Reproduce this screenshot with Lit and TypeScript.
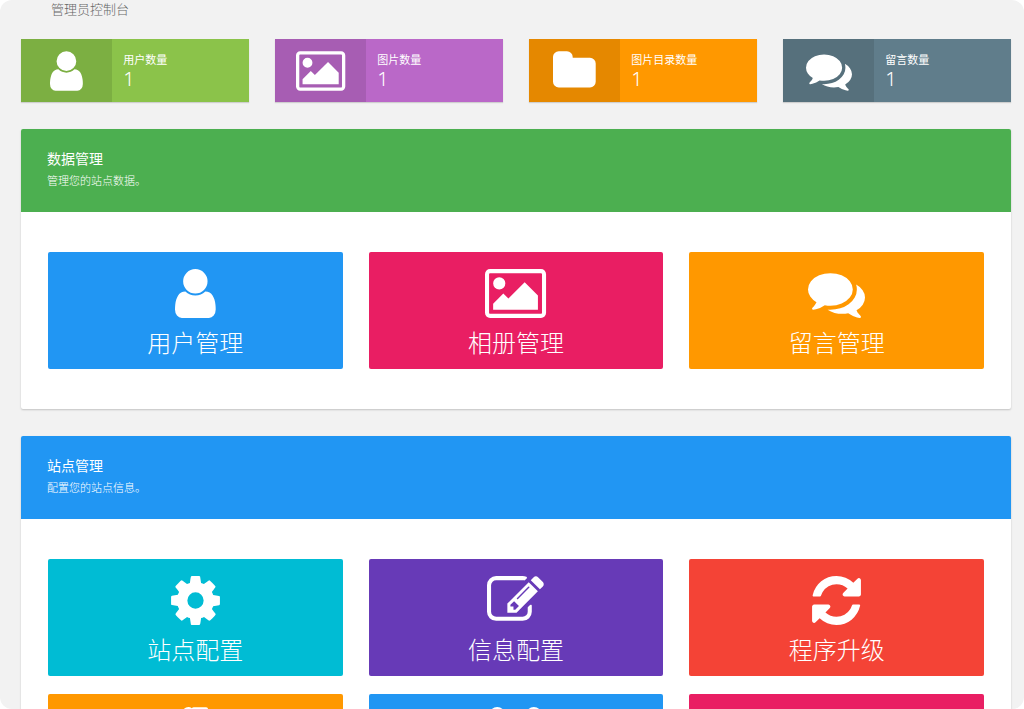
import { LitElement, html, css, svg } from "lit";
import { customElement } from "lit/decorators.js";

interface Glyph {
  w: number;
  d: string;
}

const glyphs: Record<string, Glyph> = {
  user: {
    w: 1280,
    d: "M1280 1399q0 109-62.5 187t-150.5 78h-854q-88 0-150.5-78t-62.5-187q0-85 8.5-160.5t31.5-152 58.5-131 94-89 134.5-34.5q131 128 313 128t313-128q76 0 134.5 34.5t94 89 58.5 131 31.5 152 8.5 160.5zm-256-887q0 159-112.5 271.5t-271.5 112.5-271.5-112.5-112.5-271.5 112.5-271.5 271.5-112.5 271.5 112.5 112.5 271.5z",
  },
  image: {
    w: 1920,
    d: "M640 576q0 80-56 136t-136 56-136-56-56-136 56-136 136-56 136 56 56 136zm1024 384v448h-1408v-192l320-320 160 160 512-512zm96-704h-1600q-13 0-22.5 9.5t-9.5 22.5v1216q0 13 9.5 22.5t22.5 9.5h1600q13 0 22.5-9.5t9.5-22.5v-1216q0-13-9.5-22.5t-22.5-9.5zm160 32v1216q0 66-47 113t-113 47h-1600q-66 0-113-47t-47-113v-1216q0-66 47-113t113-47h1600q66 0 113 47t47 113z",
  },
  folder: {
    w: 1664,
    d: "M1664 608v704q0 92-66 158t-158 66h-1216q-92 0-158-66t-66-158v-960q0-92 66-158t158-66h320q92 0 158 66t66 158v32h672q92 0 158 66t66 158z",
  },
  comments: {
    w: 1792,
    d: "M1408 768q0 139-94 257t-256.5 186.5-353.5 68.5q-86 0-176-16-124 88-278 128-36 9-86 16h-3q-11 0-20.5-8t-11.5-21q-1-3-1-6.5t.5-6.5 2-6l2.5-5 3.5-5.5 4-5 4.5-5 4-4.5q5-6 23-25t26-29.5 22.5-29 25-38.5 20.5-44q-124-72-195-177t-71-224q0-139 94-257t256.5-186.5 353.5-68.5 353.5 68.5 256.5 186.5 94 257zm384 256q0 120-71 224.5t-195 176.5q10 24 20.5 44t25 38.5 22.5 29 26 29.5 23 25q1 1 4 4.5t4.5 5 4 5 3.5 5.5l2.5 5 2 6 .5 6.5-1 6.5q-3 14-13 22t-22 7q-50-7-86-16-154-40-278-128-90 16-176 16-271 0-472-132 58 4 88 4 161 0 309-45t264-129q125-92 192-212t67-254q0-77-23-152 129 71 204 178t75 230z",
  },
  cog: {
    w: 1792,
    d: "M1152 896q0-106-75-181t-181-75-181 75-75 181 75 181 181 75 181-75 75-181zm512-109v222q0 12-8 23t-20 13l-185 28q-19 54-39 91 35 50 107 138 10 12 10 25t-9 23q-27 37-99 108t-94 71q-12 0-26-9l-138-108q-44 23-91 38-16 136-29 186-7 28-36 28h-222q-14 0-24.5-8.5t-11.5-21.5l-28-184q-49-16-90-37l-141 107q-10 9-25 9-14 0-25-11-126-114-165-168-7-10-7-23 0-12 8-23 15-21 51-66.5t54-70.5q-27-50-41-99l-183-27q-13-2-21-12.5t-8-23.5v-222q0-12 8-23t19-13l186-28q14-46 39-92-40-57-107-138-10-12-10-24 0-10 9-23 26-36 98.5-107.5t94.5-71.5q13 0 26 10l138 107q44-23 91-38 16-136 29-186 7-28 36-28h222q14 0 24.5 8.5t11.5 21.5l28 184q49 16 90 37l142-107q9-9 24-9 13 0 25 10 129 119 165 170 7 8 7 22 0 12-8 23-15 21-51 66.5t-54 70.5q26 50 41 98l183 28q13 2 21 12.5t8 23.5z",
  },
  edit: {
    w: 1792,
    d: "M888 1184l116-116-152-152-116 116v56h96v96h56zm440-720q-16-16-33 1l-350 350q-17 17-1 33t33-1l350-350q17-17 1-33zm80 594v190q0 119-84.5 203.5t-203.5 84.5h-832q-119 0-203.5-84.5t-84.5-203.5v-832q0-119 84.5-203.5t203.5-84.5h832q63 0 117 25 15 7 18 23 3 17-9 29l-49 49q-14 14-32 8-23-6-45-6h-832q-66 0-113 47t-47 113v832q0 66 47 113t113 47h832q66 0 113-47t47-113v-126q0-13 9-22l64-64q15-15 35-7t20 29zm-96-738l288 288-672 672h-288v-288zm444 132l-92 92-288-288 92-92q28-28 68-28t68 28l152 152q28 28 28 68t-28 68z",
  },
  refresh: {
    w: 1792,
    d: "M1639 1056q0 5-1 7-64 268-268 434.5t-478 166.5q-146 0-282.5-55t-243.5-157l-129 129q-19 19-45 19t-45-19-19-45v-448q0-26 19-45t45-19h448q26 0 45 19t19 45-19 45l-137 137q71 66 161 102t187 36q134 0 250-65t186-179q11-17 53-117 8-23 30-23h192q13 0 22.5 9.5t9.5 22.5zm25-800v448q0 26-19 45t-45 19h-448q-26 0-45-19t-19-45 19-45l138-138q-148-137-349-137-134 0-250 65t-186 179q-11 17-53 117-8 23-30 23h-199q-13 0-22.5-9.5t-9.5-22.5v-7q65-268 270-434.5t480-166.5q146 0 284 55.5t245 156.5l130-129q19-19 45-19t45 19 19 45z",
  },
  scroll: {
    w: 1280,
    d: "M230 190q0-80 56-135t134-55q60 0 110 40q20-30 60-30h390q60 0 60 60v1500q0 90-90 90h-630q-90 0-90-90z",
  },
  users: {
    w: 1920,
    d: "M593 896q-162 5-265 128h-134q-82 0-138-40.5t-56-118.5q0-353 124-353 6 0 43.5 21t97.5 42.5 119 21.5q67 0 133-23-5 37-5 66 0 139 81 256zm1071 637q0 120-73 189.5t-194 69.5h-874q-121 0-194-69.5t-73-189.5q0-53 3.5-103.5t14-109 26.5-108.5 43-97.5 62-81 85.5-53.5 111.5-20q10 0 43 21.5t73 48 107 48 135 21.5 135-21.5 107-48 73-48 43-21.5q61 0 111.5 20t85.5 53.5 62 81 43 97.5 26.5 108.5 14 109 3.5 103.5zm-1024-1277q0 106-75 181t-181 75-181-75-75-181 75-181 181-75 181 75 75 181zm704 384q0 159-112.5 271.5t-271.5 112.5-271.5-112.5-112.5-271.5 112.5-271.5 271.5-112.5 271.5 112.5 112.5 271.5zm576 225q0 78-56 118.5t-138 40.5h-134q-103-123-265-128 81-117 81-256 0-29-5-66 66 23 133 23 59 0 119-21.5t97.5-42.5 43.5-21q124 0 124 353zm-128-609q0 106-75 181t-181 75-181-75-75-181 75-181 181-75 181 75 75 181z",
  },
};

function icon(name: string) {
  const g = glyphs[name];
  return html`<svg class="icon" viewBox="0 0 ${g.w} 1792" aria-hidden="true">
    ${svg`<path d=${g.d}></path>`}
  </svg>`;
}

const stats = [
  { icon: "user", label: "用户数量", value: 1, tone: "lime" },
  { icon: "image", label: "图片数量", value: 1, tone: "purple" },
  { icon: "folder", label: "图片目录数量", value: 1, tone: "orange" },
  { icon: "comments", label: "留言数量", value: 1, tone: "slate" },
];

const panels = [
  {
    title: "数据管理",
    note: "管理您的站点数据。",
    tone: "green",
    tiles: [
      { icon: "user", label: "用户管理", tone: "blue" },
      { icon: "image", label: "相册管理", tone: "pink" },
      { icon: "comments", label: "留言管理", tone: "orange" },
    ],
  },
  {
    title: "站点管理",
    note: "配置您的站点信息。",
    tone: "blue",
    tiles: [
      { icon: "cog", label: "站点配置", tone: "cyan" },
      { icon: "edit", label: "信息配置", tone: "violet" },
      { icon: "refresh", label: "程序升级", tone: "red" },
      { icon: "scroll", label: "", tone: "orange" },
      { icon: "users", label: "", tone: "blue" },
      { icon: "", label: "", tone: "pink" },
    ],
  },
];

@customElement("app-root")
export class AppRoot extends LitElement {
  static styles = css`
    :host {
      display: block;
      height: 100vh;
      overflow: hidden;
      border-radius: 12px;
      background: #f2f2f2;
      color: #fff;
      font-family: "Noto Sans", "Noto Sans CJK SC", sans-serif;
    }
    * {
      box-sizing: border-box;
      margin: 0;
    }
    .page {
      padding: 0 13px 0 21px;
    }
    .crumb {
      padding-left: 30px;
      font-size: 13px;
      font-weight: 300;
      line-height: 19px;
      color: #666;
    }
    .stats {
      display: grid;
      grid-template-columns: repeat(4, 1fr);
      gap: 26px;
      margin: 20px 0 27px;
    }
    .stat {
      display: grid;
      grid-template-columns: 2fr 3fr;
      height: 63px;
      box-shadow: 0 1px 1px rgba(0, 0, 0, 0.14);
    }
    .stat-icon {
      display: flex;
      align-items: center;
      justify-content: center;
      background: rgba(0, 0, 0, 0.1);
    }
    .stat-text {
      padding: 13px 11px 0;
    }
    .stat-label {
      font-size: 11px;
      font-weight: 400;
      line-height: 16px;
    }
    .stat-value {
      font-size: 20px;
      font-weight: 300;
      line-height: 22px;
    }
    .icon {
      display: block;
      fill: #fff;
      overflow: visible;
    }
    .stat .icon {
      height: 46px;
    }
    .tile .icon {
      height: 57px;
    }
    .panel {
      margin-bottom: 27px;
      border-radius: 2px;
      background: #fff;
      box-shadow: 0 1px 2px rgba(0, 0, 0, 0.2);
    }
    .panel-head {
      height: 83px;
      padding: 19px 26px;
      border-radius: 2px 2px 0 0;
    }
    .panel-title {
      font-size: 14px;
      font-weight: 400;
      line-height: 22px;
    }
    .panel-note {
      font-size: 11px;
      font-weight: 300;
      line-height: 22px;
    }
    .tiles {
      display: grid;
      grid-template-columns: repeat(3, 1fr);
      gap: 18px 26px;
      padding: 40px 27px;
    }
    .tile {
      display: flex;
      flex-direction: column;
      align-items: center;
      height: 117px;
      padding-top: 13px;
      border-radius: 2px;
      color: #fff;
      font-size: 24px;
      font-weight: 300;
      line-height: 42px;
      text-decoration: none;
    }
    .lime { background: #8bc34a; }
    .purple { background: #ba68c8; }
    .orange { background: #ff9800; }
    .slate { background: #607d8b; }
    .green { background: #4caf50; }
    .blue { background: #2196f3; }
    .pink { background: #e91e63; }
    .cyan { background: #00bcd4; }
    .violet { background: #673ab7; }
    .red { background: #f44336; }
  `;

  render() {
    return html`
      <main class="page">
        <h1 class="crumb">管理员控制台</h1>
        <section class="stats">
          ${stats.map(
            (s) => html`<div class="stat ${s.tone}">
              <div class="stat-icon">${icon(s.icon)}</div>
              <div class="stat-text">
                <div class="stat-label">${s.label}</div>
                <div class="stat-value">${s.value}</div>
              </div>
            </div>`
          )}
        </section>
        ${panels.map(
          (p) => html`<section class="panel">
            <header class="panel-head ${p.tone}">
              <h2 class="panel-title">${p.title}</h2>
              <p class="panel-note">${p.note}</p>
            </header>
            <div class="tiles">
              ${p.tiles.map(
                (t) => html`<a class="tile ${t.tone}" href="#">
                  ${t.icon ? icon(t.icon) : ""}<span>${t.label}</span>
                </a>`
              )}
            </div>
          </section>`
        )}
      </main>
    `;
  }
}
